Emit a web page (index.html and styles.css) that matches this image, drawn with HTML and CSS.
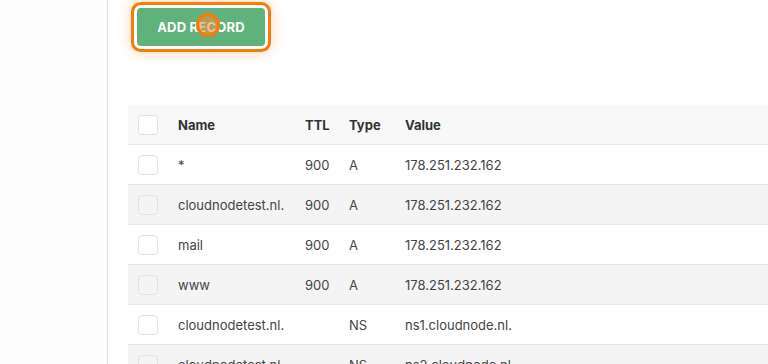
FILE: index.html
```html
<!DOCTYPE html>
<html>
<head>
<meta charset="utf-8">
<link rel="stylesheet" href="styles.css">
</head>
<body>
<aside class="sidebar"></aside>
<main class="content">
  <div class="actions">
    <button class="btn-add">ADD RECORD</button>
    <span class="click-dot"></span>
  </div>
  <table class="records">
    <thead>
      <tr><th class="c-check"><span class="box"></span></th><th class="c-name">Name</th><th class="c-ttl">TTL</th><th class="c-type">Type</th><th>Value</th></tr>
    </thead>
    <tbody>
      <tr><td class="c-check"><span class="box"></span></td><td>*</td><td>900</td><td>A</td><td>178.251.232.162</td></tr>
      <tr><td class="c-check"><span class="box"></span></td><td>cloudnodetest.nl.</td><td>900</td><td>A</td><td>178.251.232.162</td></tr>
      <tr><td class="c-check"><span class="box"></span></td><td>mail</td><td>900</td><td>A</td><td>178.251.232.162</td></tr>
      <tr><td class="c-check"><span class="box"></span></td><td>www</td><td>900</td><td>A</td><td>178.251.232.162</td></tr>
      <tr><td class="c-check"><span class="box"></span></td><td>cloudnodetest.nl.</td><td></td><td>NS</td><td>ns1.cloudnode.nl.</td></tr>
      <tr><td class="c-check"><span class="box"></span></td><td>cloudnodetest.nl.</td><td></td><td>NS</td><td>ns2.cloudnode.nl.</td></tr>
    </tbody>
  </table>
</main>
</body>
</html>
```
FILE: styles.css
```css
html, body {
  margin: 0;
  padding: 0;
  height: 100%;
  overflow: hidden;
  background: #fff;
  font-family: "Inter", "Open Sans", sans-serif;
}
body {
  display: flex;
}
.sidebar {
  flex: 0 0 107px;
  background: #fdfdfd;
  border-right: 1px solid #e6e6e6;
}
.content {
  flex: 1;
  padding-left: 20px;
  min-width: 0;
}
.actions {
  position: relative;
  padding: 8px 0 0 9px;
  height: 105px;
  box-sizing: border-box;
}
.btn-add {
  display: block;
  width: 128px;
  height: 38px;
  border: none;
  border-radius: 4px;
  background: #5fb27b;
  color: #fff;
  font-family: inherit;
  font-weight: 700;
  font-size: 13px;
  letter-spacing: 0.2px;
  box-shadow: 0 0 0 3px #fff, 0 0 0 6px #f77b0b, 0 0 14px 6px rgba(247, 123, 11, 0.35);
}
.click-dot {
  position: absolute;
  left: 68px;
  top: 13px;
  width: 18px;
  height: 18px;
  border: 3px solid #f77b0b;
  border-radius: 50%;
  background: rgba(240, 140, 60, 0.55);
}
.records {
  border-collapse: collapse;
  width: 100%;
  font-size: 13px;
  color: #444;
}
.records th, .records td {
  height: 39px;
  padding: 0;
  text-align: left;
  border-bottom: 1px solid #e6e6e6;
  white-space: nowrap;
}
.records thead tr {
  background: #f8f8f8;
}
.records th {
  font-weight: 700;
  color: #333;
}
.records tbody tr:nth-child(even) {
  background: #f4f4f4;
}
.c-check {
  width: 50px;
  padding-left: 10px !important;
  box-sizing: border-box;
}
.box {
  display: block;
  width: 18px;
  height: 18px;
  border: 1px solid #e2e2e2;
  border-radius: 4px;
  background: #fff;
}
tbody tr:nth-child(even) .box {
  background: #f4f4f4;
}
.c-name { width: 127px; }
.c-ttl { width: 44px; }
.c-type { width: 56px; }
```
